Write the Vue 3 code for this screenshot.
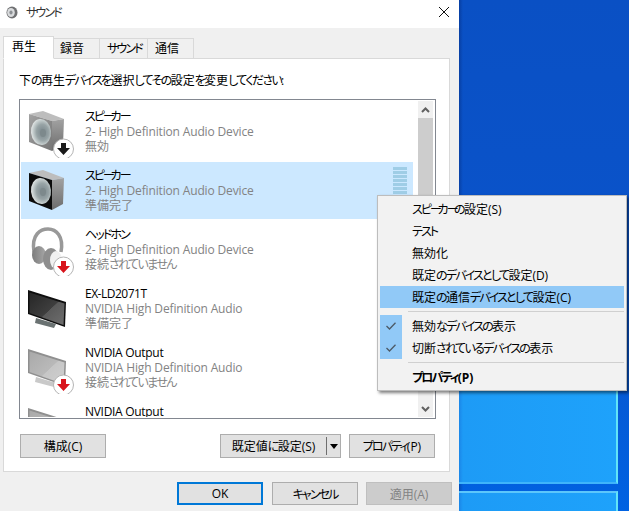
<template>
  <div class="screen">
    <div class="window">
      <div class="titlebar">
        <svg class="title-icon" viewBox="0 0 12 13">
          <ellipse cx="6" cy="6.5" rx="5.5" ry="6" fill="#6f7072" />
          <ellipse cx="5" cy="6.5" rx="3.8" ry="4.6" fill="#d9dbdd" />
          <ellipse cx="5" cy="6.5" rx="1.6" ry="2" fill="#8c9094" />
        </svg>
        <span class="title-text"><Jp text="サウンド" /></span>
        <svg class="close-icon" viewBox="0 0 10 10">
          <path d="M0 0 L10 10 M10 0 L0 10" stroke="#111" stroke-width="1" fill="none" />
        </svg>
      </div>

      <div class="tabs">
        <div
          v-for="(tab, i) in tabs"
          :key="tab.label"
          class="tab"
          :class="[{ active: i === 0 }, tab.cls]"
        ><Jp :text="tab.label" /></div>
      </div>

      <div class="panel">
        <p class="hint"><Jp text="下の再生デバイスを選択してその設定を変更してください:" /></p>

        <div class="device-box">
          <svg class="defs" width="0" height="0">
            <defs>
              <linearGradient id="gFront" x1="0" y1="0" x2="1" y2="1">
                <stop offset="0" stop-color="#a2a2a2" />
                <stop offset="1" stop-color="#767676" />
              </linearGradient>
              <linearGradient id="gSide" x1="0" y1="0" x2="0" y2="1">
                <stop offset="0" stop-color="#a2a2a2" />
                <stop offset="1" stop-color="#6c6c6c" />
              </linearGradient>
              <radialGradient id="gCone" cx="0.58" cy="0.52" r="0.62">
                <stop offset="0" stop-color="#77848a" />
                <stop offset="0.5" stop-color="#98a4a6" />
                <stop offset="0.78" stop-color="#c8d0d0" />
                <stop offset="1" stop-color="#f0f2f2" />
              </radialGradient>
              <linearGradient id="gScreenDark" x1="0" y1="0" x2="1" y2="1">
                <stop offset="0" stop-color="#262626" />
                <stop offset="0.55" stop-color="#3e3e3e" />
                <stop offset="0.56" stop-color="#5a5a5a" />
                <stop offset="1" stop-color="#6e6e6e" />
              </linearGradient>
              <linearGradient id="gScreenGrey" x1="0" y1="0" x2="1" y2="1">
                <stop offset="0" stop-color="#a9a9a9" />
                <stop offset="0.55" stop-color="#b9b9b9" />
                <stop offset="0.56" stop-color="#c6c6c6" />
                <stop offset="1" stop-color="#d0d0d0" />
              </linearGradient>
              <linearGradient id="gCup" x1="0" y1="0" x2="1" y2="0">
                <stop offset="0" stop-color="#7c7c7c" />
                <stop offset="1" stop-color="#a8a8a8" />
              </linearGradient>
            </defs>
          </svg>

          <div class="device-list">
            <div
              v-for="(d, i) in devices"
              :key="i"
              class="device"
              :class="{ selected: d.selected }"
            >
              <svg class="device-icon" viewBox="0 0 50 50">
                <g v-if="d.icon === 'speaker'">
                  <polygon points="3,6 17,3 38,11 26,13" fill="#bdbdbd" />
                  <polygon points="26,13 38,11 37,37 26,43" fill="url(#gSide)" />
                  <polygon
                    points="3,6 26,13 26,43 3,34"
                    :fill="d.selected ? '#0c0c0c' : 'url(#gFront)'"
                  />
                  <ellipse cx="15" cy="24" rx="10" ry="13" fill="url(#gCone)" transform="rotate(-6 15 24)" />
                  <ellipse cx="17" cy="25" rx="3" ry="4" fill="#7d898c" />
                </g>
                <g v-else-if="d.icon === 'headphone'">
                  <path d="M8 26 C5 8 15 3 22 3 C30 3 38 10 35 26" fill="none" stroke="#999" stroke-width="3.5" />
                  <ellipse cx="13" cy="29" rx="7" ry="9" fill="url(#gCup)" />
                  <ellipse cx="25" cy="33" rx="8" ry="11" fill="#8e8e8e" />
                  <ellipse cx="30" cy="34" rx="6" ry="9" fill="#f1f1f1" />
                </g>
                <g v-else>
                  <polygon points="10,33 30,39 28,43 9,38" :fill="d.badge ? '#c9c9c9' : '#6a7272'" />
                  <polygon
                    points="2,5 40,17 39,42 2,29"
                    :fill="d.badge ? '#8f8f8f' : '#0e0e0e'"
                  />
                  <polygon
                    points="3.5,7.5 38.5,18.5 37.5,40 3.5,28"
                    :fill="d.badge ? 'url(#gScreenGrey)' : 'url(#gScreenDark)'"
                  />
                </g>
                <g v-if="d.badge && d.badge !== 'none'">
                  <circle cx="37.5" cy="41" r="10" fill="#fff" stroke="#b5b5b5" stroke-width="1" />
                  <polygon
                    points="35,35 40,35 40,40 44,40 37.5,47 31,40 35,40"
                    :fill="d.badge === 'red' ? '#d8141c' : '#1a1a1a'"
                  />
                </g>
              </svg>
              <div class="device-text">
                <div class="device-name" :class="d.nameCls"><Jp :text="d.name" /></div>
                <div v-if="d.driver" class="device-sub driver">{{ d.driver }}</div>
                <div v-if="d.status" class="device-sub"><Jp :text="d.status" /></div>
              </div>
              <div v-if="d.selected" class="meter">
                <span v-for="n in 12" :key="n" class="meter-bar"></span>
              </div>
            </div>
          </div>

          <div class="scrollbar">
            <div class="scroll-btn">
              <svg width="9" height="6" viewBox="0 0 9 6">
                <path d="M1 5 L4.5 1.5 L8 5" fill="none" stroke="#606060" stroke-width="2" />
              </svg>
            </div>
            <div class="scroll-track"><div class="scroll-thumb"></div></div>
            <div class="scroll-btn">
              <svg width="9" height="6" viewBox="0 0 9 6">
                <path d="M1 1 L4.5 4.5 L8 1" fill="none" stroke="#606060" stroke-width="2" />
              </svg>
            </div>
          </div>
        </div>

        <div class="panel-actions">
          <button class="btn">構成(C)</button>
          <div class="panel-actions-right">
            <button class="btn btn-split">
              <span class="split-label"><Jp text="既定値に設定(S)" /></span>
              <span class="split-line"></span>
              <span class="split-arrow"></span>
            </button>
            <button class="btn"><span><Jp text="プロパティ(P)" /></span></button>
          </div>
        </div>
      </div>

      <div class="dialog-actions">
        <button class="btn btn-default">OK</button>
        <button class="btn"><span><Jp text="キャンセル" /></span></button>
        <button class="btn btn-disabled">適用(A)</button>
      </div>
    </div>

    <div class="desktop">
      <div class="pane pane-top"></div>
      <div class="pane pane-bottom"></div>
    </div>

    <div class="menu">
      <template v-for="(m, i) in menuItems" :key="i">
        <div v-if="m.separator" class="menu-sep"><span></span></div>
        <div v-else class="menu-item" :class="{ hover: m.hover, strong: m.bold }">
          <span class="menu-check" :class="{ on: m.checked }">
            <svg v-if="m.checked" width="10" height="8" viewBox="0 0 10 8">
              <path d="M0.5 4 L3.5 7 L9.5 0.8" fill="none" stroke="#4d5a66" stroke-width="1.3" />
            </svg>
          </span>
          <span class="menu-label"><Jp :text="m.label" /></span>
        </div>
      </template>
    </div>
  </div>
</template>

<script setup>
import { h } from 'vue'

// Meiryo UI sets kana much narrower than Noto, kanji and latin about the same,
// so kana runs get tracked in and everything else is left alone
const Jp = (props) =>
  props.text.match(/ー+|[ァ-ヶ]+|[ぁ-ん]+|[^ぁ-んァ-ヶー]+/g).map((run) => {
    let cls = ''
    if (run[0] === 'ー') cls = 'run-bar'
    else if (/[ァ-ヶ]/.test(run[0])) cls = 'run-kata'
    else if (/[ぁ-ん]/.test(run[0])) cls = 'run-hira'
    return h('span', { class: cls }, run)
  })
Jp.props = ['text']

const tabs = [
  { label: '再生', cls: 'tab-play' },
  { label: '録音', cls: 'tab-rec' },
  { label: 'サウンド', cls: 'tab-sound' },
  { label: '通信', cls: 'tab-comm' }
]

const hdAudio = '2- High Definition Audio Device'
const nvAudio = 'NVIDIA High Definition Audio'

const devices = [
  { icon: 'speaker', name: 'スピーカー', driver: hdAudio, status: '無効', badge: 'black' },
  { icon: 'speaker', name: 'スピーカー', driver: hdAudio, status: '準備完了', selected: true },
  { icon: 'headphone', name: 'ヘッドホン', driver: hdAudio, status: '接続されていません', badge: 'red' },
  { icon: 'monitor', name: 'EX-LD2071T', nameCls: 'model', driver: nvAudio, status: '準備完了' },
  { icon: 'monitor', name: 'NVIDIA Output', nameCls: 'output', driver: nvAudio, status: '接続されていません', badge: 'red' },
  { icon: 'monitor', name: 'NVIDIA Output', nameCls: 'output', badge: 'none' }
]

const menuItems = [
  { label: 'スピーカーの設定(S)' },
  { label: 'テスト' },
  { label: '無効化' },
  { label: '既定のデバイスとして設定(D)' },
  { label: '既定の通信デバイスとして設定(C)', hover: true },
  { separator: true },
  { label: '無効なデバイスの表示', checked: true },
  { label: '切断されているデバイスの表示', checked: true },
  { separator: true },
  { label: 'プロパティ(P)', bold: true }
]
</script>

<style>
html, body {
  margin: 0;
  overflow: hidden;
}

.run-kata { letter-spacing: -1.9px; }
.run-hira { letter-spacing: -1.65px; }
.run-bar { letter-spacing: -4.5px; }
</style>

<style scoped>
.screen {
  position: relative;
  display: flex;
  width: 629px;
  height: 511px;
  overflow: hidden;
  font-family: "Open Sans", "Noto Sans CJK JP", sans-serif;
  font-feature-settings: "palt";
  font-size: 12px;
  color: #000;
}

.window {
  width: 459px;
  flex-shrink: 0;
  background: #f0f0f0;
  display: flex;
  flex-direction: column;
}

.titlebar {
  height: 28px;
  background: #fff;
  display: flex;
  align-items: center;
  padding: 0 10px 4px 6px;
  box-sizing: border-box;
}

.title-icon {
  width: 12px;
  height: 13px;
}

.title-text {
  margin-left: 8px;
  flex: 1;
  color: #333;
}

.close-icon {
  width: 10px;
  height: 10px;
}

.tabs {
  display: flex;
  align-items: flex-end;
  padding: 8px 0 0 3px;
  height: 31px;
  box-sizing: border-box;
  margin-bottom: -1px;
  position: relative;
  z-index: 1;
}

.tab {
  height: 21px;
  box-sizing: border-box;
  border: 1px solid #d9d9d9;
  border-left-width: 0;
  line-height: 20px;
  background: #f0f0f0;
}

.tab.active {
  height: 23px;
  background: #fff;
  border-left-width: 1px;
  border-bottom-color: #fff;
  line-height: 20px;
}

.tab-play { width: 51px; padding-left: 8px; }
.tab-rec { width: 46px; padding-left: 6px; }
.tab-sound { width: 48px; padding-left: 7px; }
.tab-comm { width: 46px; padding-left: 7px; }

.panel {
  width: 447px;
  height: 414px;
  margin-left: 3px;
  box-sizing: border-box;
  border: 1px solid #d9d9d9;
  background: #fff;
  padding: 0 13px 0 15px;
  display: flex;
  flex-direction: column;
}

.hint {
  margin: 14px 0 0;
  line-height: 16px;
}

.device-box {
  margin-top: 10px;
  height: 320px;
  box-sizing: border-box;
  border: 1px solid #828790;
  display: flex;
  padding: 1px 2px 1px 1px;
  overflow: hidden;
}

.defs {
  position: absolute;
}

.device-list {
  flex: 1;
  padding: 2px 5px 0 0;
  overflow: hidden;
}

.device {
  height: 57px;
  margin-bottom: 2px;
  display: flex;
  padding: 6px 6px 0 5px;
  box-sizing: border-box;
  position: relative;
}

.device.selected {
  background: #cce8ff;
}

.device-icon {
  width: 50px;
  height: 50px;
  flex-shrink: 0;
  margin-top: -1px;
}

.device-text {
  margin-left: 9px;
  flex: 1;
}

.device-name {
  line-height: 15px;
}

.device-name.model {
  letter-spacing: -0.5px;
}

.device-name.output {
  letter-spacing: -0.3px;
}

.device-sub {
  line-height: 15px;
  color: #838383;
}

.device-sub.driver {
  letter-spacing: -0.15px;
}

.meter {
  display: flex;
  flex-direction: column;
  gap: 1px;
  width: 14px;
  margin-top: -1px;
}

.meter-bar {
  height: 3px;
  background: #9fcde6;
}

.scrollbar {
  width: 15px;
  flex-shrink: 0;
  background: #f0f0f0;
  display: flex;
  flex-direction: column;
}

.scroll-btn {
  height: 17px;
  display: flex;
  align-items: center;
  justify-content: center;
  flex-shrink: 0;
}

.scroll-track {
  flex: 1;
}

.scroll-thumb {
  height: 120px;
  background: #cdcdcd;
}

.panel-actions {
  display: flex;
  justify-content: space-between;
  margin-top: 15px;
  padding: 0 1px;
}

.panel-actions-right {
  display: flex;
  gap: 8px;
}

.btn {
  width: 86px;
  height: 24px;
  padding: 0;
  box-sizing: border-box;
  background: #e1e1e1;
  border: 1px solid #adadad;
  border-radius: 0;
  font: inherit;
  color: #000;
  display: flex;
  align-items: center;
  justify-content: center;
}

.btn-split {
  width: 121px;
  justify-content: flex-start;
}

.split-label {
  width: 105px;
  text-align: center;
}

.split-line {
  width: 1px;
  height: 18px;
  background: #6e6e6e;
}

.split-arrow {
  margin-left: 3px;
  border-left: 4px solid transparent;
  border-right: 4px solid transparent;
  border-top: 5px solid #000;
}

.dialog-actions {
  display: flex;
  justify-content: flex-end;
  gap: 8px;
  padding: 10px 7px 0 0;
}

.dialog-actions .btn {
  height: 23px;
}

.btn-default {
  border: 2px solid #0078d7;
  margin-right: 1px;
}

.btn-disabled {
  background: #cccccc;
  border-color: #bfbfbf;
  color: #838383;
}

.desktop {
  flex: 1;
  display: flex;
  flex-direction: column;
  justify-content: flex-end;
  gap: 7px;
  background:
    linear-gradient(90deg, rgba(0, 0, 40, 0.22), transparent 4px),
    linear-gradient(180deg, #0a50c4 0%, #0a54cc 60%, #0062e2 100%);
}

.pane {
  margin-right: 11px;
  border-right: 2px solid #62e4f8;
  background: linear-gradient(90deg, #1b86e8 0, #1d9bf6 4px, #1ea2fb 100%);
}

.pane-top {
  height: 105px;
  border-bottom: 2px solid #3fb4fb;
  box-sizing: border-box;
}

.pane-bottom {
  height: 20px;
  border-top: 2px solid #5cc6fb;
  box-sizing: border-box;
}

.menu {
  position: absolute;
  left: 377px;
  top: 195px;
  width: 250px;
  box-sizing: border-box;
  border: 1px solid #bdbdbd;
  padding: 2px;
  background: #f2f2f2;
  box-shadow: 2px 2px 3px rgba(0, 0, 0, 0.5);
}

.menu-item {
  height: 22px;
  display: flex;
  align-items: center;
}

.menu-item.hover {
  background: #91c9f7;
}

.menu-item.strong {
  font-weight: 700;
}

.menu-check {
  width: 22px;
  height: 22px;
  display: flex;
  align-items: center;
  justify-content: center;
}

.menu-check.on {
  background: #91c9f7;
}

.menu-label {
  margin-left: 10px;
}

.menu-sep {
  height: 7px;
  padding: 3px 0 0 28px;
  box-sizing: border-box;
}

.menu-sep span {
  display: block;
  height: 1px;
  background: #d0d0d0;
}
</style>
